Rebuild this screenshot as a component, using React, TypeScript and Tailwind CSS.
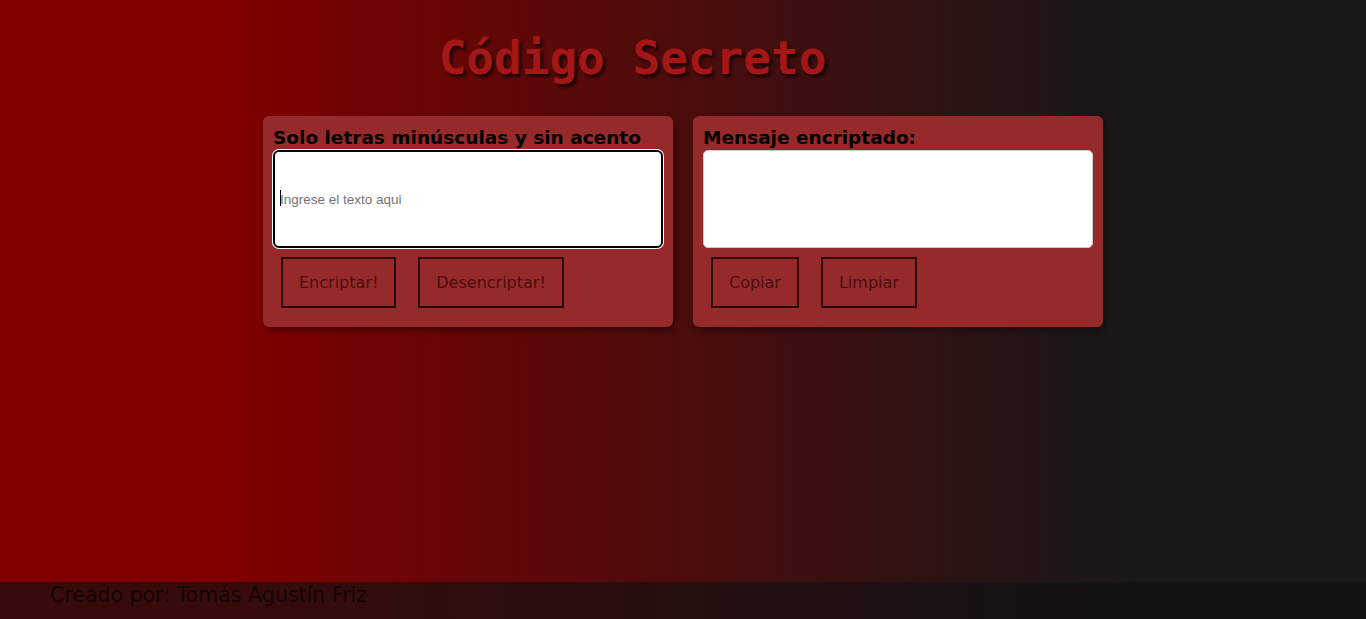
export default function App() {
  return (
    <div className="h-[619px] flex flex-col bg-[linear-gradient(to_right,#800000_17%,#181818_83%)] overflow-hidden">
      {/* Title */}
      <h1 className="mt-[28px] pr-[101px] text-center text-[46px] leading-[60px] font-bold text-[#a51717] [text-shadow:3px_3px_3px_#1a0505] font-['DejaVu_Sans_Mono',monospace]">
        Código Secreto
      </h1>

      {/* Cards */}
      <div className="mt-[28px] flex justify-center gap-5">
        <Card title="Solo letras minúsculas y sin acento" focused buttons={['Encriptar!', 'Desencriptar!']} />
        <Card title="Mensaje encriptado:" buttons={['Copiar', 'Limpiar']} />
      </div>

      <div className="flex-1" />

      {/* Footer */}
      <footer className="h-[37px] bg-[#111111]/65 pl-[50px] flex items-start">
        <p className="text-[20.5px] leading-[26px] text-[#140404] font-['DejaVu_Sans',sans-serif]">
          Creado por: Tomás Agustín Friz
        </p>
      </footer>
    </div>
  );
}

interface CardProps {
  title: string;
  buttons: string[];
  focused?: boolean;
}

function Card({ title, buttons, focused }: CardProps) {
  return (
    <div className="w-[410px] h-[211px] rounded-md bg-[#962a2a] p-[10px] shadow-[2px_3px_6px_rgba(0,0,0,0.45)] font-['DejaVu_Sans',sans-serif]">
      <h2 className="text-[18.5px] leading-6 font-bold text-black whitespace-nowrap">{title}</h2>
      <div className="relative">
        {focused ? (
          <>
            <textarea
              placeholder="Ingrese el texto aqui"
              className="block w-[390px] h-[98px] resize-none rounded-[6px] bg-white border-2 border-black ring-1 ring-white outline-none px-[5px] pt-[39px] text-[13.5px] leading-[18px] placeholder:text-[#757575] font-['Liberation_Sans',Arial,sans-serif]"
            />
            <span className="absolute left-[7px] top-[40px] w-px h-[16px] bg-black" />
          </>
        ) : (
          <textarea className="block w-[390px] h-[98px] resize-none rounded-[5px] bg-white border border-[#cccccc] outline-none px-[5px] pt-[39px] text-[13.5px] font-['Liberation_Sans',Arial,sans-serif]" />
        )}
      </div>
      <div className="flex gap-[22px] ml-2 mt-[9px]">
        {buttons.map((b) => (
          <button
            key={b}
            className="h-[51px] px-[16px] border-2 border-[#2a0a0a] bg-transparent text-[16px] text-[#4a0e0e] font-['DejaVu_Sans',sans-serif]"
          >
            {b}
          </button>
        ))}
      </div>
    </div>
  );
}
